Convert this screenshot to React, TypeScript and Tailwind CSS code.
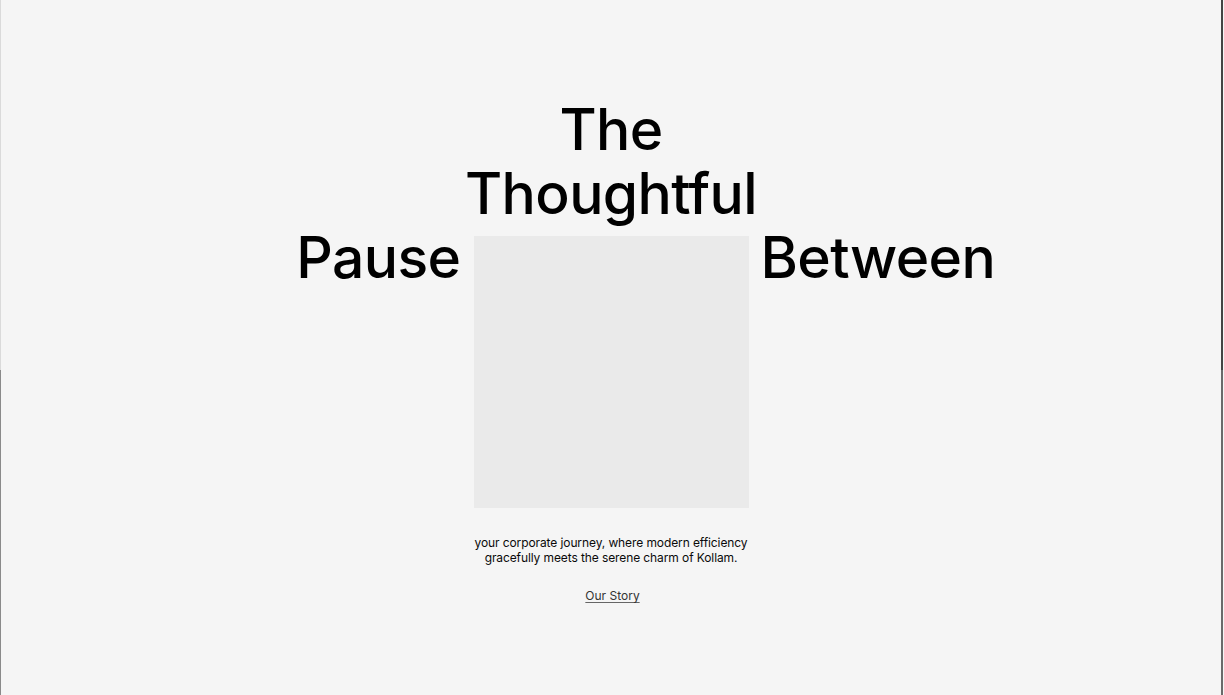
import React from 'react';

const App: React.FC = () => {
  return (
    <div
      className="min-h-[695px] w-full bg-[#f5f5f5] text-black flex"
      style={{ fontFamily: 'Inter, "Noto Sans", sans-serif' }}
    >
      <div className="w-px flex flex-col">
        <div className="h-[370px] bg-[#dadada]" />
        <div className="flex-1 bg-[#8a8a8a]" />
      </div>
      <main className="flex-1 flex flex-col items-center pt-[98px]">
        <h1 className="w-[1000px] flex flex-col items-center text-[57px] leading-[64px] font-medium tracking-[-0.6px]">
          <span>The</span>
          <span>Thoughtful</span>
          <div className="w-full grid grid-cols-[1fr_275px_1fr] items-start">
            <span className="flex justify-end pr-[13px]">Pause</span>
            <div className="h-[272px] mt-[10px] bg-[#eaeaea]" />
            <span className="flex justify-start pl-[12px]">Between</span>
          </div>
        </h1>
        <p className="mt-[27px] w-[280px] text-center text-[12px] leading-[15px] tracking-[-0.1px] text-[#0a0a0a]">
          your corporate journey, where modern efficiency gracefully meets the serene charm of Kollam.
        </p>
        <a href="#" className="mt-[22px] ml-[3px] text-[12px] text-[#333] underline underline-offset-2 decoration-[#666]">
          Our Story
        </a>
      </main>
      <div className="w-[2px] flex flex-col mr-px">
        <div className="h-[370px] bg-[#444]" />
        <div className="flex-1 bg-[#6a6a6a]" />
      </div>
    </div>
  );
};

export default App;
